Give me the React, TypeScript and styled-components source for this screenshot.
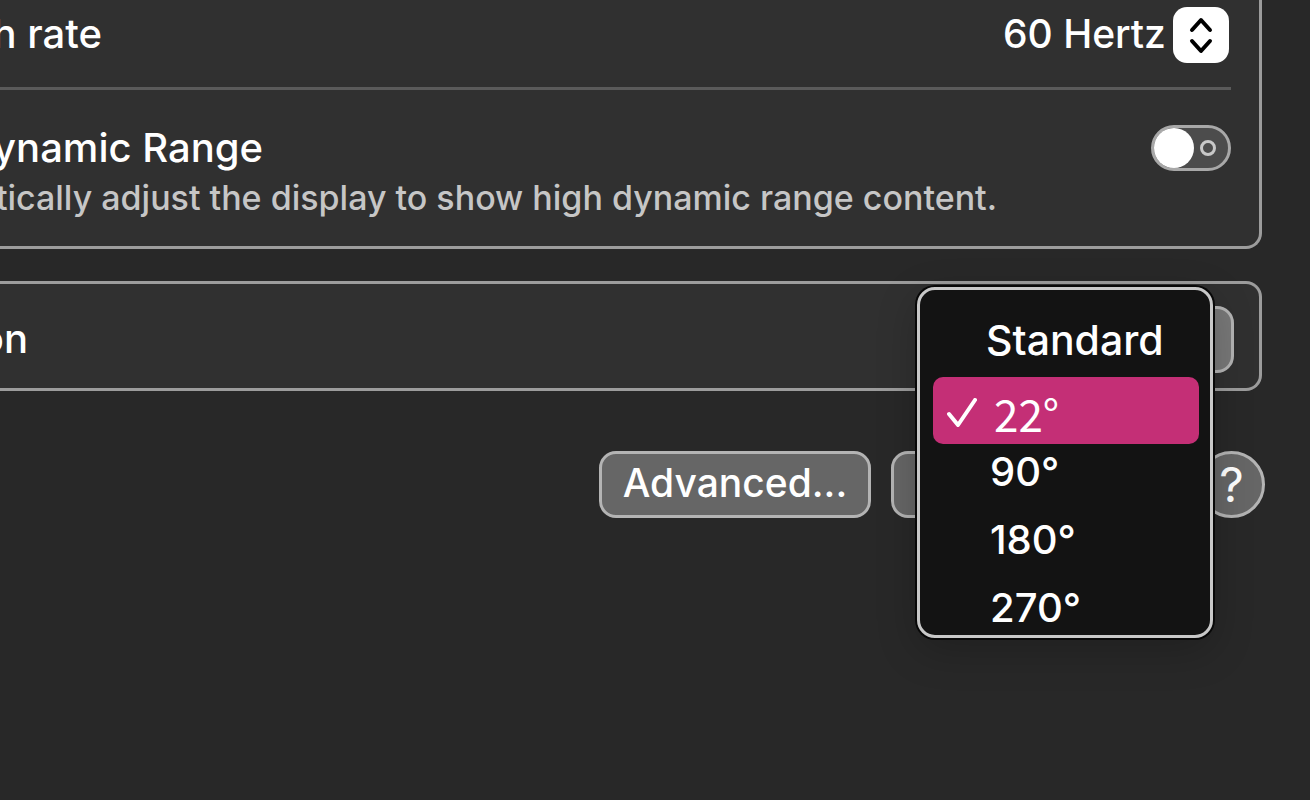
import React from "react";
import styled, { createGlobalStyle } from "styled-components";

const GlobalStyle = createGlobalStyle`
  *, *::before, *::after { box-sizing: border-box; }
  body {
    margin: 0;
    background: #282828;
    color: #fff;
    font-family: Inter, "Liberation Sans", sans-serif;
    font-weight: 500;
    overflow: hidden;
  }
  button, select, input { font: inherit; color: inherit; margin: 0; }
`;

const Page = styled.main`
  min-height: 100vh;
  padding-right: 48px;
  overflow: hidden;
`;

const Panel = styled.section<{ $first?: boolean }>`
  background: #303030;
  border: 3px solid #9c9c9c;
  border-left: 0;
  border-top-width: ${(p) => (p.$first ? 0 : 3)}px;
  border-radius: ${(p) => (p.$first ? "0 0 16px 0" : "0 16px 16px 0")};
  margin-top: ${(p) => (p.$first ? 0 : 32)}px;
  padding-right: 28px;
`;

const RateRow = styled.div`
  display: flex;
  align-items: center;
  justify-content: space-between;
  height: 90px;
  padding-bottom: 20px;
  border-bottom: 3px solid #5a5a5a;
`;

const RotationRow = styled.div`
  display: flex;
  align-items: center;
  justify-content: space-between;
  height: 104px;
  padding-top: 6px;
`;

const Label = styled.label<{ $width: number }>`
  display: flex;
  justify-content: flex-end;
  width: ${(p) => p.$width}px;
  font-size: 40px;
  line-height: 48px;
  white-space: nowrap;
`;

const RangeRow = styled.div`
  display: flex;
  align-items: flex-start;
  justify-content: space-between;
  padding: 34px 0 28px;
`;

const Description = styled.p`
  display: flex;
  justify-content: flex-end;
  width: 997px;
  margin: 6px 0 0;
  color: #c6c6c6;
  font-size: 34px;
  line-height: 40px;
  white-space: nowrap;
`;

const RateField = styled.div`
  position: relative;
  display: flex;
  align-items: center;
  margin: 2px 2px 0 0;
`;

const RateSelect = styled.select`
  appearance: none;
  background: transparent;
  border: 0;
  outline: 0;
  padding: 0 63px 2px 0;
  font-size: 39px;
  line-height: 48px;
  height: 56px;
`;

const Stepper = styled.span`
  position: absolute;
  right: 0;
  top: 0;
  width: 56px;
  height: 56px;
  border-radius: 14px;
  background: #fff;
  pointer-events: none;
`;

const Switch = styled.input`
  appearance: none;
  display: flex;
  align-items: center;
  justify-content: space-between;
  width: 80px;
  height: 46px;
  margin-top: 1px;
  border: 3px solid #a8a8a8;
  border-radius: 23px;
  background: #4c4c4c;
  padding-right: 12px;
  &::before {
    content: "";
    width: 40px;
    height: 40px;
    border-radius: 50%;
    background: #fff;
  }
  &::after {
    content: "";
    width: 16px;
    height: 16px;
    border: 3px solid #c8c8c8;
    border-radius: 50%;
  }
`;

const RotationField = styled.div`
  position: relative;
  width: 300px;
  margin-right: -3px;
`;

const PushButton = styled.button<{ $width: string }>`
  display: block;
  width: ${(p) => p.$width};
  height: 67px;
  padding: 0 0 3px;
  border: 3px solid #b4b4b4;
  border-radius: 17px;
  background: #666;
  font-size: 39px;
  line-height: 48px;
`;

const RotationButton = styled(PushButton)`
  background: #787878;
`;

const HelpButton = styled(PushButton)`
  border-radius: 50%;
  padding: 0;
  font-size: 48px;
  font-weight: 400;
`;

const Footer = styled.footer`
  display: flex;
  justify-content: flex-end;
  gap: 20px;
  margin: 60px -3px 0 0;
`;

const Menu = styled.div`
  position: absolute;
  z-index: 2;
  top: -19px;
  right: 21px;
  width: 296px;
  padding: 26px 11px 3px 13px;
  border: 3px solid #c8c8c8;
  border-radius: 18px;
  background: #131313;
  box-shadow: 0 0 0 2px #080808, 0 12px 40px rgba(0, 0, 0, 0.22);
`;

const MenuItem = styled.button`
  display: block;
  width: 100%;
  padding: 0 0 0 57px;
  border: 0;
  background: transparent;
  text-align: left;
  font-size: 40px;
  line-height: 48px;
`;

const HeadItem = styled(MenuItem)`
  padding-left: 53px;
  font-size: 41px;
`;

const ActiveItem = styled(MenuItem)`
  display: flex;
  align-items: center;
  gap: 17px;
  height: 67px;
  margin: 13px 0 4px;
  padding: 6px 0 0 14px;
  border-radius: 10px;
  background: #c42f76;
  font-family: "Noto Sans CJK SC", "Noto Sans", sans-serif;
  font-size: 44px;
  font-weight: 400;
`;

const MenuGroup = styled.div`
  display: flex;
  flex-direction: column;
  gap: 20px;
`;

export default function App() {
  return (
    <Page>
      <GlobalStyle />
      <Panel $first>
        <RateRow>
          <Label htmlFor="rate" $width={102}>h rate</Label>
          <RateField>
            <RateSelect id="rate" defaultValue="60">
              <option value="60">60 Hertz</option>
            </RateSelect>
            <Stepper>
              <svg width="56" height="56" viewBox="0 0 56 56" fill="none" stroke="#000" strokeWidth="4" strokeLinecap="round" strokeLinejoin="round">
                <path d="M19 23L28 13L37 23M19 34L28 44L37 34" />
              </svg>
            </Stepper>
          </RateField>
        </RateRow>
        <RangeRow>
          <div>
            <Label htmlFor="range" $width={263}>ynamic Range</Label>
            <Description id="range-note">
              tically adjust the display to show high dynamic range content.
            </Description>
          </div>
          <Switch type="checkbox" role="switch" id="range" aria-describedby="range-note" />
        </RangeRow>
      </Panel>

      <Panel>
        <RotationRow>
          <Label id="rotation" as="span" $width={28}>on</Label>
          <RotationField>
            <RotationButton $width="100%" aria-labelledby="rotation" aria-haspopup="menu" aria-expanded="true" />
            <Menu role="menu" aria-labelledby="rotation">
              <HeadItem role="menuitemradio" aria-checked="false">Standard</HeadItem>
              <ActiveItem role="menuitemradio" aria-checked="true">
                <svg width="30" height="30" viewBox="0 0 30 30" fill="none" stroke="#fff" strokeWidth="4" strokeLinecap="round" strokeLinejoin="round">
                  <path d="M2 16L11 27L28 2" />
                </svg>
                22°
              </ActiveItem>
              <MenuGroup>
                <MenuItem role="menuitemradio" aria-checked="false">90°</MenuItem>
                <MenuItem role="menuitemradio" aria-checked="false">180°</MenuItem>
                <MenuItem role="menuitemradio" aria-checked="false">270°</MenuItem>
              </MenuGroup>
            </Menu>
          </RotationField>
        </RotationRow>
      </Panel>

      <Footer>
        <PushButton $width="272px">Advanced...</PushButton>
        <PushButton $width="287px" aria-label="More" />
        <HelpButton $width="67px">?</HelpButton>
      </Footer>
    </Page>
  );
}
